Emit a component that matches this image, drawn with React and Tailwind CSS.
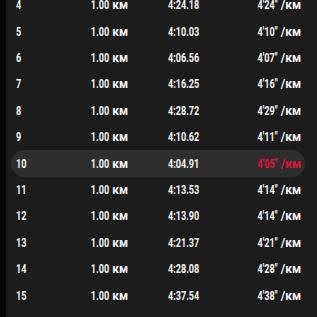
import React from 'react'

const splits = [
  { n: 4, time: '4:24.18', pace: "4'24\"" },
  { n: 5, time: '4:10.03', pace: "4'10\"" },
  { n: 6, time: '4:06.56', pace: "4'07\"" },
  { n: 7, time: '4:16.25', pace: "4'16\"" },
  { n: 8, time: '4:28.72', pace: "4'29\"" },
  { n: 9, time: '4:10.62', pace: "4'11\"" },
  { n: 10, time: '4:04.91', pace: "4'05\"", best: true },
  { n: 11, time: '4:13.53', pace: "4'14\"" },
  { n: 12, time: '4:13.90', pace: "4'14\"" },
  { n: 13, time: '4:21.37', pace: "4'21\"" },
  { n: 14, time: '4:28.08', pace: "4'28\"" },
  { n: 15, time: '4:37.54', pace: "4'38\"" },
]

export default function App() {
  return (
    <div className="flex h-[317px] w-full overflow-hidden bg-black">
      <div className="w-[6px] shrink-0 bg-black" />
      <div className="flex-1 bg-[#1c1c1c] pl-[5px] pr-[12px] font-['Roboto',sans-serif] text-[13px] font-bold text-[#f2f2f2]">
        <div className="-mt-[8.2px]">
          {splits.map((s) => (
            <div
              key={s.n}
              className={`flex h-[26.4px] items-center rounded-full pl-[5px] pr-[4px] ${s.best ? 'bg-[#2e2e2e]' : ''}`}
            >
              <div className="w-[77px] shrink-0">
                <span className="inline-block origin-left scale-x-[0.7]">{s.n}</span>
              </div>
              <div className="flex w-[35px] shrink-0 items-baseline justify-end gap-[3px] whitespace-nowrap">
                <span className="inline-block shrink-0 origin-right scale-x-[0.7]">1.00</span>
                <span className="shrink-0 text-[12px]">км</span>
              </div>
              <div className="ml-[40px] shrink-0 whitespace-nowrap">
                <span className="inline-block origin-left scale-x-[0.7]">{s.time}</span>
              </div>
              <div className={`flex flex-1 items-baseline justify-end whitespace-nowrap ${s.best ? 'text-[#e0133c]' : ''}`}>
                <span className="inline-block shrink-0 origin-right scale-x-[0.7]">{s.pace}</span>
                <span className="ml-[3px] shrink-0 text-[12px]">/км</span>
              </div>
            </div>
          ))}
        </div>
      </div>
    </div>
  )
}
